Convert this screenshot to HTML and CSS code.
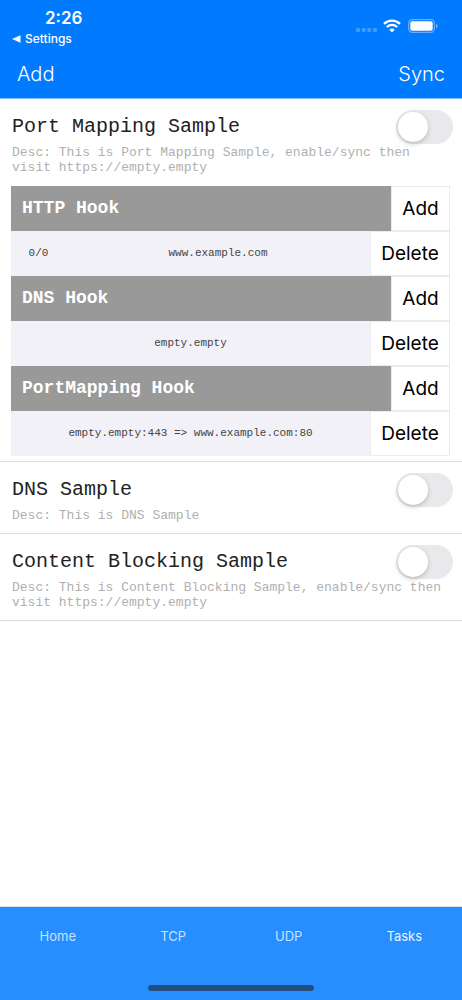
FILE: index.html
```html
<!DOCTYPE html>
<html lang="en">
<head>
<meta charset="utf-8">
<meta name="viewport" content="width=device-width, initial-scale=1">
<title>Hooks</title>
<link rel="stylesheet" href="styles.css">
</head>
<body>
<header class="top">
  <div class="status">
    <div class="status-left">
      <div class="clock">2:26</div>
      <a class="back" href="#"><svg width="9" height="8" viewBox="0 0 9 8"><path d="M0 4 8.500 0.300V7.700Z" fill="#fff"/></svg>Settings</a>
    </div>
    <div class="status-icons">
      <svg width="22" height="5" viewBox="0 0 22 5" fill="#fff" fill-opacity=".25"><rect width="4" height="4" rx="1.200"/><rect x="5.700" width="4" height="4" rx="1.200"/><rect x="11.300" width="4" height="4" rx="1.200"/><rect x="17" width="4" height="4" rx="1.200"/></svg>
      <svg class="wifi" width="18" height="14" viewBox="0 0 18 14" fill="none" stroke="#fff" stroke-width="2.300"><path d="M1 4.800a11.500 11.500 0 0 1 16 0"/><path d="M3.900 8a7.400 7.400 0 0 1 10.200 0"/><path d="M9 13.500 6.300 10.700a3.900 3.900 0 0 1 5.400 0Z" fill="#fff" stroke="none"/></svg>
      <svg class="battery" width="30" height="14" viewBox="0 0 30 14"><rect x=".6" y=".6" width="25.800" height="12.800" rx="3.800" fill="none" stroke="#fff" stroke-opacity=".4" stroke-width="1.200"/><rect x="2.300" y="2.300" width="22.400" height="9.400" rx="2" fill="#fff"/><path d="M28 4.700c2 .8 2 3.800 0 4.600Z" fill="#fff" fill-opacity=".45"/></svg>
    </div>
  </div>
  <div class="nav">
    <button class="nav-button" type="button">Add</button>
    <button class="nav-button" type="button">Sync</button>
  </div>
</header>

<main class="list">
  <section class="sample">
    <div class="sample-head">
      <label class="title" for="port">Port Mapping Sample</label>
      <input class="switch" id="port" type="checkbox" role="switch">
    </div>
    <p class="desc">Desc: This is Port Mapping Sample, enable/sync then visit https://empty.empty</p>
    <div class="hooks">
      <div class="row hook"><h2 class="hook-name">HTTP Hook</h2><button class="action" type="button">Add</button></div>
      <div class="row"><span class="cell index">0/0</span><span class="cell">www.example.com</span><button class="action delete" type="button">Delete</button></div>
      <div class="row hook"><h2 class="hook-name">DNS Hook</h2><button class="action" type="button">Add</button></div>
      <div class="row"><span class="cell">empty.empty</span><button class="action delete" type="button">Delete</button></div>
      <div class="row hook"><h2 class="hook-name">PortMapping Hook</h2><button class="action" type="button">Add</button></div>
      <div class="row"><span class="cell">empty.empty:443 =&gt; www.example.com:80</span><button class="action delete" type="button">Delete</button></div>
    </div>
  </section>
  <section class="sample">
    <div class="sample-head">
      <label class="title" for="dns">DNS Sample</label>
      <input class="switch" id="dns" type="checkbox" role="switch">
    </div>
    <p class="desc">Desc: This is DNS Sample</p>
  </section>
  <section class="sample">
    <div class="sample-head">
      <label class="title" for="content">Content Blocking Sample</label>
      <input class="switch" id="content" type="checkbox" role="switch">
    </div>
    <p class="desc">Desc: This is Content Blocking Sample, enable/sync then visit https://empty.empty</p>
  </section>
</main>

<footer class="bottom">
  <nav class="tabs">
    <a class="tab" href="#">Home</a>
    <a class="tab" href="#">TCP</a>
    <a class="tab" href="#">UDP</a>
    <a class="tab current" href="#">Tasks</a>
  </nav>
  <div class="home-bar"></div>
</footer>
</body>
</html>
```

FILE: styles.css
```css
* { box-sizing: border-box; }

body {
  margin: 0;
  min-height: 100vh;
  display: flex;
  flex-direction: column;
  background: #fff;
  font-family: Inter, "Liberation Sans", sans-serif;
}

button { font-family: inherit; cursor: pointer; }
a { text-decoration: none; }

.top {
  background: #007aff;
  color: #fff;
  border-bottom: 1px solid #80bcff;
}

.status {
  display: flex;
  justify-content: space-between;
  padding: 8px 24px 0 12px;
}

.clock {
  padding-left: 33px;
  font-size: 17px;
  font-weight: 600;
  line-height: 20px;
}

.back {
  display: flex;
  align-items: center;
  gap: 4px;
  color: #fff;
  font-size: 12px;
  font-weight: 500;
  line-height: 22px;
}

.status-icons {
  display: flex;
  align-items: flex-end;
  height: 25px;
}

.wifi { margin-left: 5px; }
.battery { margin-left: 7px; }

.nav {
  display: flex;
  justify-content: space-between;
  padding: 0 17px;
}

.nav-button {
  padding: 0;
  border: 0;
  background: none;
  color: #fff;
  font-size: 20px;
  font-weight: 300;
  line-height: 48px;
}

.list { flex: 1; }

.sample {
  padding: 11px 0 10px;
  border-bottom: 1px solid #dcdcde;
}

.sample:first-child { padding-bottom: 5px; }

.sample-head {
  display: flex;
  align-items: center;
  justify-content: space-between;
  padding: 0 9px 0 12px;
}

.title {
  color: #222;
  font: 20px/34px "Liberation Mono", monospace;
}

.switch {
  appearance: none;
  flex: none;
  width: 57px;
  height: 34px;
  margin: 0;
  padding: 2px;
  border-radius: 17px;
  background: #e9e9eb;
}

.switch::before {
  content: "";
  display: block;
  width: 30px;
  height: 30px;
  border-radius: 50%;
  background: #fff;
  box-shadow: 0 2px 5px rgba(0, 0, 0, .2);
}

.switch:checked { background: #34c759; }
.switch:checked::before { margin-left: auto; }

.desc {
  margin: 0;
  padding: 1px 9px 0 12px;
  color: #b0b0b0;
  font: 13px/15px "Liberation Mono", monospace;
}

.hooks { margin: 11px 12px 0 11px; }

.row {
  display: flex;
  align-items: stretch;
  height: 45px;
  background: #f2f1f7;
}

.hook { background: #999; }

.hook-name {
  flex: 1;
  margin: 0;
  padding-left: 11px;
  color: #fff;
  font: bold 18px/45px "Liberation Mono", monospace;
}

.cell {
  flex: 1;
  color: #444;
  text-align: center;
  font: 11px/45px "Liberation Mono", monospace;
}

.index { flex: 0 0 55px; }

.action {
  width: 59px;
  padding: 0;
  border: 1px solid #ebebed;
  background: #fff;
  color: #000;
  font-size: 19px;
  font-weight: 400;
}

.delete { width: 80px; }

.bottom {
  display: flex;
  flex-direction: column;
  align-items: center;
  border-top: 1px solid #d9e2ea;
  background: #268eff;
}

.tabs {
  display: flex;
  width: 100%;
}

.tab {
  flex: 1;
  color: #c8e1ff;
  text-align: center;
  font-size: 13px;
  line-height: 58px;
}

.current { color: #e8f3ff; }

.home-bar {
  width: 36%;
  height: 6px;
  margin: 20px 0 9px;
  border-radius: 3px;
  background: #224f80;
}
```
